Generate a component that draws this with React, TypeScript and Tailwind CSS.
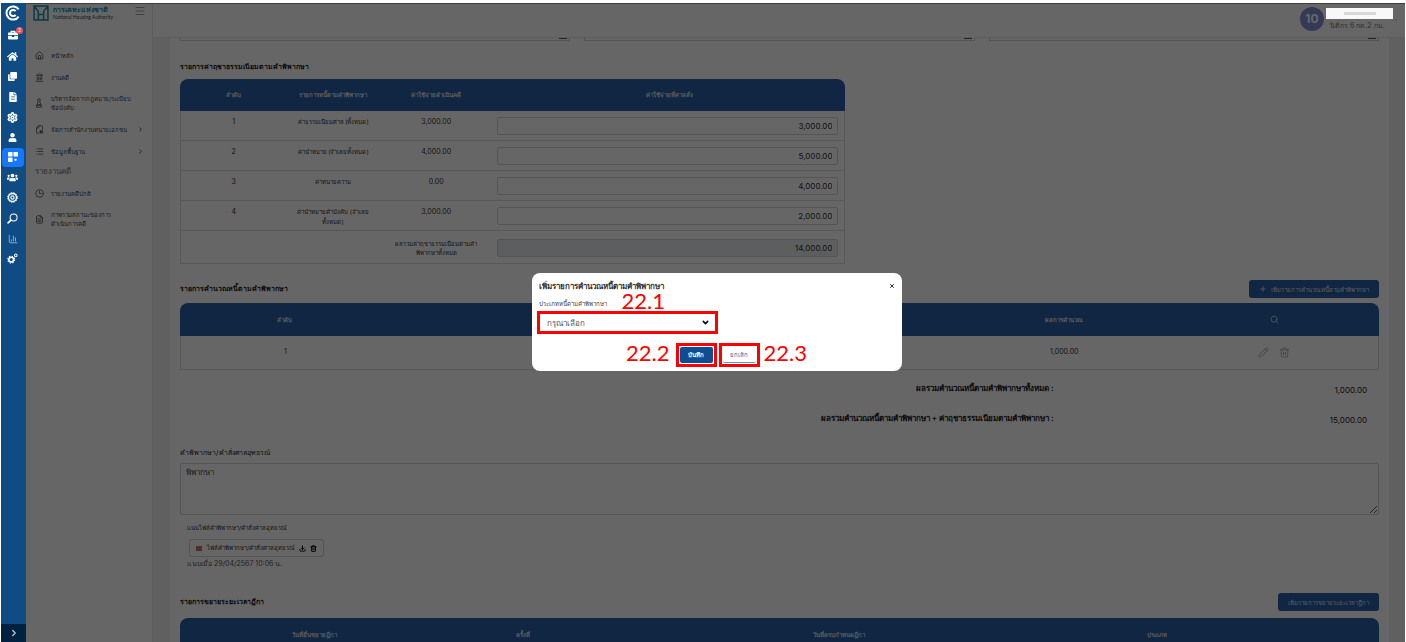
import type { ReactNode } from "react";
import {
  FaHome, FaClone, FaFileAlt, FaUser, FaUsers, FaBriefcase,
} from "react-icons/fa";
import {
  House, Landmark, FileCog, List, Clock3, FileText, Menu, ChevronRight, ChevronDown,
  Plus, Search, Pencil, Trash2, Download, ChartColumn, Settings, X,
} from "lucide-react";

const feeRows = [
  { no: "1", name: "ค่าธรรมเนียมศาล (ทั้งหมด)", cost: "3,000.00", order: "3,000.00" },
  { no: "2", name: "ค่านำหมาย (จำเลยทั้งหมด)", cost: "4,000.00", order: "5,000.00" },
  { no: "3", name: "ค่าทนายความ", cost: "0.00", order: "4,000.00" },
  { no: "4", name: "ค่านำหมายคำบังคับ (จำเลย\nทั้งหมด)", cost: "3,000.00", order: "2,000.00" },
];

function Brand() {
  return (
    <svg viewBox="0 0 16 16" className="size-4" fill="none" stroke="#fff" strokeWidth="2">
      <path d="M13.6 4.4A6.6 6.6 0 1 0 13.6 11.6" />
      <path d="M10.6 6.2A3.1 3.1 0 1 0 10.6 9.8" />
    </svg>
  );
}

function Tiles() {
  return (
    <svg viewBox="0 0 10 10" className="size-[10px]" fill="#fff">
      <rect width="4.5" height="4.5" rx=".6" />
      <rect x="5.5" width="4.5" height="4.5" rx=".6" />
      <rect y="5.5" width="4.5" height="4.5" rx=".6" />
      <rect x="6.5" y="6.8" width="2" height="2" rx=".4" />
    </svg>
  );
}

function CogDisc() {
  return (
    <svg viewBox="0 0 12 12" className="size-[11px]" fill="none" stroke="#fff">
      <circle cx="6" cy="6" r="4.4" strokeWidth="1.6" />
      <circle cx="6" cy="6" r="5.3" strokeWidth="1" strokeDasharray="1.6 1.2" />
      <circle cx="6" cy="6" r="1.8" strokeWidth="1.2" />
    </svg>
  );
}

function Magnifier() {
  return (
    <svg viewBox="0 0 12 12" className="size-[11px]" fill="none" stroke="#fff" strokeLinecap="round">
      <circle cx="7.2" cy="4.8" r="3.8" strokeWidth="1.1" />
      <path d="M4.3 7.7L1.2 10.8" strokeWidth="1.8" />
    </svg>
  );
}

function Gears() {
  return (
    <svg viewBox="0 0 12 12" className="size-[11px]" fill="none" stroke="#fff">
      <circle cx="4.6" cy="7.2" r="2.6" strokeWidth="1.7" />
      <circle cx="4.6" cy="7.2" r="3.8" strokeWidth="1.1" strokeDasharray="1.6 1.38" />
      <circle cx="9.6" cy="2.6" r="1.4" strokeWidth="1.1" />
    </svg>
  );
}

function Statue() {
  return (
    <svg viewBox="0 0 10 12" className="h-[10px] w-2 shrink-0" fill="none" stroke="currentColor">
      <circle cx="5" cy="2.4" r="1.7" />
      <path d="M3.6 4.5L3 8.5h4l-.6-4M2 8.5h6v2.8H2z" />
    </svg>
  );
}

const railItems: { label: string; icon: ReactNode; active?: boolean }[] = [
  { label: "home", icon: <FaHome className="size-[11px]" /> },
  { label: "copies", icon: <FaClone className="size-[9px]" /> },
  { label: "documents", icon: <FaFileAlt className="size-[10px]" /> },
  { label: "settings", icon: <Settings className="size-[11px]" strokeWidth={3.5} /> },
  { label: "user", icon: <FaUser className="size-[9px]" /> },
  { label: "apps", icon: <Tiles />, active: true },
  { label: "groups", icon: <FaUsers className="size-[11px]" /> },
  { label: "targets", icon: <CogDisc /> },
  { label: "search", icon: <Magnifier /> },
  { label: "charts", icon: <ChartColumn className="size-[10px] text-[#9dbbd8]" /> },
  { label: "system", icon: <Gears /> },
];

function Rail() {
  return (
    <nav className="flex w-[25px] shrink-0 flex-col items-center bg-[#0f4c84] text-white">
      <a href="#" aria-label="brand" className="flex h-[20px] items-center pr-px"><Brand /></a>
      <a href="#" aria-label="cases" className="relative flex h-[23px] items-center pr-px">
        <FaBriefcase className="size-[10px]" />
        <span className="absolute top-1 -right-1 flex size-[7px] items-center justify-center rounded-full bg-[#ff4d4f] text-[5px] leading-none">2</span>
      </a>
      <div className="flex h-[223px] flex-col justify-between pr-[2px]">
        {railItems.map((r) => (
          <a key={r.label} href="#" aria-label={r.label}
            className={r.active ? "flex h-[19px] w-[22px] items-center justify-center rounded bg-[#1677ff]" : "flex h-5 w-[22px] items-center justify-center"}>
            {r.icon}
          </a>
        ))}
      </div>
      <button aria-label="expand" className="mt-auto flex h-[18px] w-full items-center justify-center bg-[#002140]">
        <ChevronRight className="size-[10px] text-[#c0c8d0]" strokeWidth={3} />
      </button>
    </nav>
  );
}

function NavItem({ icon, children, tall, arrow }: { icon: ReactNode; children: ReactNode; tall?: boolean; arrow?: boolean }) {
  return (
    <a href="#" className={tall ? "flex h-[30px] items-center gap-2" : "flex h-[22px] items-center gap-2"}>
      <span className="flex w-2 justify-center">{icon}</span>
      <span className="flex-1 leading-[9px] whitespace-nowrap">{children}</span>
      {arrow && <ChevronRight className="mr-2 size-[7px]" strokeWidth={3} />}
    </a>
  );
}

function Sidebar() {
  return (
    <aside className="w-[127px] shrink-0 border-r border-[#e8e8e8] bg-white pl-[9px] text-[6px] text-[#44474d]">
      <div className="-ml-[2px] flex h-[19px] items-center gap-1">
        <svg viewBox="0 0 15 15" className="size-4" fill="none" stroke="#1b93b3" strokeWidth="1.4">
          <path d="M1 1h13v13H1zM1 1l4 5v8M14 1l-4 5v8M5 9h5" />
        </svg>
        <div className="flex-1">
          <div className="text-[7px] leading-[8px] font-bold text-[#1490b0]">การเคหะแห่งชาติ</div>
          <div className="font-['Lato'] text-[5px] leading-[6px] whitespace-nowrap text-[#444]">National Housing Authority</div>
        </div>
        <button aria-label="menu" className="mr-[6px] mb-1"><Menu className="size-3 text-[#888]" strokeWidth={1.5} /></button>
      </div>
      <div className="mt-[22px]">
        <NavItem icon={<House className="size-[9px] shrink-0" />}>หน้าหลัก</NavItem>
        <NavItem icon={<Landmark className="size-[9px] shrink-0" />}>งานคดี</NavItem>
        <NavItem tall icon={<Statue />}>บริหารจัดการกฎหมาย/ระเบียบ<br />ข้อบังคับ</NavItem>
        <NavItem arrow icon={<FileCog className="size-[9px] shrink-0 -scale-x-100" />}>จัดการสำนักงานทนายเอกชน</NavItem>
        <NavItem arrow icon={<List className="size-[9px] shrink-0" />}>ข้อมูลพื้นฐาน</NavItem>
        <div className="h-5 text-[8px] leading-[18px] text-[#777]">รายงานคดี</div>
        <NavItem icon={<Clock3 className="size-[9px] shrink-0" />}>รายงานคดีปกติ</NavItem>
        <NavItem tall icon={<FileText className="size-[9px] shrink-0" />}>ภาพรวมสถานะของการ<br />ดำเนินการคดี</NavItem>
      </div>
    </aside>
  );
}

function Header() {
  return (
    <header className="flex h-[35px] shrink-0 justify-end border-b border-[#e8e8e8] bg-white">
      <div className="mt-1 flex size-6 items-center justify-center rounded-full bg-[#8590dc] font-['Inter'] text-[12px] font-bold text-white">10</div>
      <div className="mr-[25px] w-[56px] pt-[18px] pl-[6px] text-[7px] leading-[10px] whitespace-nowrap text-[#777]">นิติกร 6 กด.2 กม.</div>
    </header>
  );
}

const th = "text-center text-[6px] font-bold text-[#dfe3ea]";
const field = "block h-[18px] w-full rounded-[2px] border border-[#d4d4d4] px-[5px] text-right text-[8px] text-[#333]";

function FeeTable() {
  return (
    <div className="w-[55.5%] overflow-hidden rounded-t-lg">
      <table className="w-full table-fixed border-separate border-spacing-0 text-[6px] leading-[10px]">
        <thead>
          <tr className="h-8 bg-[#2b5fa5]">
            <th className={`${th} w-[16%]`}>ลำดับ</th>
            <th className={`${th} w-[14%]`}>รายการหนี้ตามคำพิพากษา</th>
            <th className={`${th} w-[17%]`}>ค่าใช้จ่ายดำเนินคดี</th>
            <th className={th}>ค่าใช้จ่ายที่ศาลสั่ง</th>
          </tr>
        </thead>
        <tbody className="text-center align-top text-[#333]">
          {feeRows.map((r) => (
            <tr key={r.no}>
              <td className="border-b border-l border-[#ddd] pt-[6px] text-[7px]">{r.no}</td>
              <td className="border-b border-[#ddd] pt-[6px] whitespace-pre">{r.name}</td>
              <td className="border-b border-[#ddd] pt-[6px] text-[7px]">{r.cost}</td>
              <td className="border-r border-b border-[#ddd] pt-[6px] pr-[6px] pb-[5px] pl-1">
                <input aria-label={r.name} defaultValue={r.order} className={field} />
              </td>
            </tr>
          ))}
          <tr>
            <td className="border-b border-l border-[#ddd]" />
            <td className="border-b border-[#ddd]" />
            <td className="border-b border-[#ddd] pt-2 leading-[9px]">ผลรวมค่าฤชาธรรมเนียมตามคำ<br />พิพากษาทั้งหมด</td>
            <td className="border-r border-b border-[#ddd] pt-2 pr-[6px] pb-[6px] pl-1">
              <input aria-label="ผลรวม" readOnly defaultValue="14,000.00" className={`${field} bg-[#e6eaee]`} />
            </td>
          </tr>
        </tbody>
      </table>
    </div>
  );
}

function SectionHead({ title, action, plus }: { title: string; action: string; plus?: boolean }) {
  return (
    <div className="flex h-[18px] items-center justify-between">
      <h2 className="text-[7px] font-semibold text-[#222]">{title}</h2>
      <button className="flex h-[18px] items-center gap-1 rounded-[3px] bg-[#2b5fa5] px-[10px] text-[6px] font-medium text-[#dfe3ea]">
        {plus && <Plus className="size-2" strokeWidth={2.5} />}{action}
      </button>
    </div>
  );
}

function Content() {
  return (
    <main className="min-w-0 flex-1 overflow-hidden bg-[#f0f0f0] pr-4 pl-[17px]">
      <div className="h-full bg-white px-[10px]">
        <div className="grid h-[3px] grid-cols-3 gap-x-[14px]">
          {[0, 1, 2].map((i) => (
            <div key={i} className="flex h-[3px] justify-end border border-t-0 border-[#d4d4d4] pr-[2px]">
              <span className="h-px w-2 bg-[#555]" />
            </div>
          ))}
        </div>
        <h2 className="mt-[20px] mb-[7px] text-[7px] leading-[11px] font-semibold text-[#222]">รายการค่าฤชาธรรมเนียมตามคำพิพากษา</h2>
        <FeeTable />
        <div className="mt-4 mb-[5px]">
          <SectionHead plus title="รายการคำนวณหนี้ตามคำพิพากษา" action="เพิ่มรายการคำนวณหนี้ตามคำพิพากษา" />
        </div>
        <div className="overflow-hidden rounded-t-lg">
          <table className="w-full table-fixed border-separate border-spacing-0">
            <thead>
              <tr className="h-[33px] bg-[#2b5fa5]">
                <th className={`${th} w-[17.5%]`}>ลำดับ</th>
                <th />
                <th className={`${th} w-[17.5%]`}>ผลการคำนวณ</th>
                <th className={`${th} w-[17.5%]`}><Search aria-label="ค้นหา" className="mx-auto size-[9px]" /></th>
              </tr>
            </thead>
            <tbody>
              <tr className="h-[34px] text-center text-[7px] text-[#333]">
                <td className="border-b border-l border-[#ddd]">1</td>
                <td className="border-b border-[#ddd]" />
                <td className="border-b border-[#ddd]">1,000.00</td>
                <td className="border-r border-b border-[#ddd]">
                  <div className="flex justify-center gap-[10px] text-[#aaa]">
                    <button aria-label="แก้ไข"><Pencil className="size-[11px]" /></button>
                    <button aria-label="ลบ"><Trash2 className="size-[11px]" /></button>
                  </div>
                </td>
              </tr>
            </tbody>
          </table>
        </div>
        <dl className="grid grid-cols-[73.6%_1fr] gap-y-4 pt-3 pr-3 text-right text-[8px] leading-3 text-[#222]">
          <dt className="font-semibold">ผลรวมคำนวณหนี้ตามคำพิพากษาทั้งหมด :</dt>
          <dd className="pt-[2px]">1,000.00</dd>
          <dt className="font-semibold">ผลรวมคำนวณหนี้ตามคำพิพากษา + ค่าฤชาธรรมเนียมตามคำพิพากษา :</dt>
          <dd className="pt-[2px]">15,000.00</dd>
        </dl>
        <label htmlFor="verdict" className="mt-[21px] block text-[7px] leading-3 text-[#222]">คำพิพากษา/คำสั่งศาลอุทธรณ์</label>
        <textarea id="verdict" defaultValue="พิพากษา" className="mt-1 block h-[52px] w-full rounded-[2px] border border-[#d4d4d4] px-[5px] py-[2px] text-[8px] leading-3 text-[#444]" />
        <div className="mt-2 pl-[7px] text-[6px] leading-[10px] text-[#333]">
          <p>แนบไฟล์คำพิพากษา/คำสั่งศาลอุทธรณ์</p>
          <div className="mt-[6px] mb-[2px] ml-[2px] flex h-[18px] w-fit items-center gap-1 rounded-[2px] border border-[#d4d4d4] px-[6px]">
            <span className="mr-px h-[5px] w-[6px] bg-[#c9776d]" />
            <span>ไฟล์คำพิพากษา/คำสั่งศาลอุทธรณ์</span>
            <button aria-label="ดาวน์โหลด"><Download className="size-[7px] text-black" strokeWidth={3} /></button>
            <button aria-label="ลบไฟล์"><Trash2 className="size-[7px] text-black" strokeWidth={3} /></button>
          </div>
          <p className="text-[7px] text-[#555]">แนบเมื่อ 29/04/2567 10:06 น.</p>
        </div>
        <div className="mt-6 mb-[7px]">
          <SectionHead title="รายการขยายระยะเวลาฎีกา" action="เพิ่มรายการขยายระยะเวลาฎีกา" />
        </div>
        <div className="overflow-hidden rounded-t-lg">
          <table className="w-full table-fixed border-separate border-spacing-0">
            <thead>
              <tr className="h-[33px] bg-[#2b5fa5]">
                <th className={`${th} w-[22.5%]`}>วันที่ยื่นขยายฎีกา</th>
                <th className={`${th} w-[12.2%]`}>ครั้งที่</th>
                <th className={`${th} w-[40.6%]`}>วันที่ครบกำหนดฎีกา</th>
                <th className={`${th} w-[12.4%]`}>ประเภท</th>
                <th />
              </tr>
            </thead>
          </table>
        </div>
      </div>
    </main>
  );
}

function Dialog() {
  return (
    <div role="dialog" aria-labelledby="dlg-title" className="h-[98px] w-[370px] rounded-lg bg-white px-[5px] pt-[7px] text-[#333]">
      <div className="flex h-3 items-center justify-between pr-[2px] pl-[2px]">
        <h3 id="dlg-title" className="text-[8px] leading-[8px] font-semibold text-[#333]">เพิ่มรายการคำนวณหนี้ตามคำพิพากษา</h3>
        <button aria-label="ปิด"><X className="size-[6px]" strokeWidth={4} /></button>
      </div>
      <div className="relative w-[181px] pt-[7px]">
        <label htmlFor="debt" className="block h-3 pl-[2px] text-[6px] leading-[10px] text-[#444]">ประเภทหนี้ตามคำพิพากษา</label>
        <span className="absolute top-px left-[85px] z-10 font-['Lato'] text-[22px] leading-4 text-[#ff0000]">22.1</span>
        <div className="relative border-[3px] border-[#ff0000]">
          <select id="debt" className="block h-[17px] w-full appearance-none bg-white px-[7px] text-[8px] text-[#555]">
            <option>กรุณาเลือก</option>
          </select>
          <ChevronDown className="pointer-events-none absolute top-1 right-[5px] size-[9px] text-black" strokeWidth={4} />
        </div>
      </div>
      <div className="mt-[9px] flex items-start justify-center gap-[2px] font-['Lato'] text-[22px] leading-[20px] text-[#ff0000]">
        <span className="mr-1">22.2</span>
        <span className="border-[3px] border-[#ff0000] p-px">
          <button className="block h-4 w-[33px] rounded-[2px] bg-[#0f4c92] font-[Inter,sans-serif] text-[6px] leading-4 font-bold text-white">บันทึก</button>
        </span>
        <span className="border-[3px] border-[#ff0000] p-px">
          <button className="block h-4 w-[33px] rounded-[2px] border-b border-[#6f93bd] bg-white font-[Inter,sans-serif] text-[6px] leading-4 text-[#2b5fa5]">ยกเลิก</button>
        </span>
        <span className="ml-[2px]">22.3</span>
      </div>
    </div>
  );
}

export default function App() {
  return (
    <div className="flex h-screen min-h-[642px] overflow-hidden bg-white px-px pt-[3px] font-[Inter,sans-serif]">
      <Rail />
      <div className="relative flex min-w-0 flex-1">
        <Sidebar />
        <div className="flex min-w-0 flex-1 flex-col">
          <Header />
          <Content />
        </div>
        <div className="absolute inset-0 flex items-center justify-center border-t border-black/40 bg-black/60 pb-[2px] pl-[2px]">
          <Dialog />
        </div>
        <div className="absolute top-[5px] right-3 h-[11px] w-[67px] bg-[#f8f8f8]">
          <div className="mx-auto mt-1 h-[3px] w-8 bg-[#d8d8d8]" />
        </div>
        <ChevronDown className="absolute top-[14px] right-[6px] size-[6px] text-[#444]" />
      </div>
    </div>
  );
}
